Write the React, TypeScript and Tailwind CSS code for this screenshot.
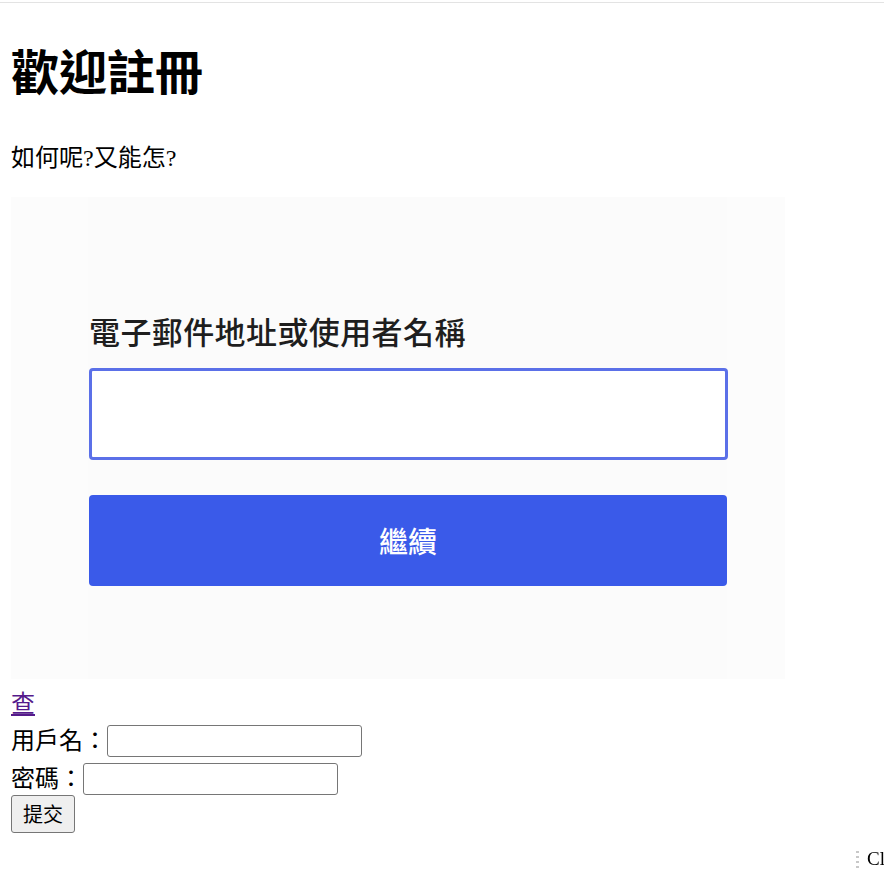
import React from "react";

export default function App() {
  return (
    <div className="relative min-h-[871px] bg-white text-black font-['Liberation_Serif','Noto_Sans_CJK_TC',serif]">
      <div className="h-[2px]" />
      <div className="h-px bg-[#e3e3e3]" />
      <div className="pl-[11px]">
        <h1 className="mt-[43px] h-[56px] text-[48px] leading-[56px] font-bold">歡迎註冊</h1>
        <p className="mt-[42px] h-[28px] text-[24px] leading-[28px]">如何呢?又能怎?</p>
        <div className="mt-[25px] flex h-[482px] w-[774px] bg-[#fcfcfc]">
          <div className="ml-[77px] flex w-[639px] flex-col bg-[#fbfbfb] pt-[112px] font-['Noto_Sans_CJK_TC',sans-serif]">
            <div className="ml-[1px] h-[44px] text-[31px] leading-[44px] font-medium text-[#1e1e1e] tracking-[0.4px]">
              電子郵件地址或使用者名稱
            </div>
            <div className="mt-[15px] ml-[1px] h-[92px] w-[639px] rounded-[4px] border-[3px] border-[#5b70e8] bg-white" />
            <div className="mt-[35px] ml-[1px] flex h-[91px] w-[638px] items-center justify-center rounded-[4px] bg-[#3a5ae9] text-[29px] font-medium text-white">
              繼續
            </div>
          </div>
        </div>
        <div className="flex h-[46px] items-center pt-[4px] text-[24px]">
          <a href="#" className="text-[#551a8b] underline">查</a>
        </div>
        <div className="flex h-[32px] items-center text-[24px]">
          <span>用戶名：</span>
          <div className="h-[32px] w-[255px] rounded-[3px] border border-[#767676] bg-white" />
        </div>
        <div className="mt-[6px] flex h-[32px] items-center text-[24px]">
          <span>密碼：</span>
          <div className="h-[32px] w-[255px] rounded-[3px] border border-[#767676] bg-white" />
        </div>
        <button className="flex h-[38px] w-[64px] items-center justify-center rounded-[3px] border border-[#767676] bg-[#efefef] text-[20px] font-['Noto_Sans_CJK_TC',sans-serif]">
          提交
        </button>
      </div>
      <div className="fixed left-[856px] top-[849px] flex items-center gap-[8px]">
        <div className="flex flex-col gap-[3px]">
          <div className="h-[2px] w-[3px] bg-[#c8c8c8]" />
          <div className="h-[2px] w-[3px] bg-[#c8c8c8]" />
          <div className="h-[2px] w-[3px] bg-[#c8c8c8]" />
          <div className="h-[2px] w-[3px] bg-[#c8c8c8]" />
        </div>
        <span className="text-[19px] leading-[20px] text-black whitespace-nowrap">Cl</span>
      </div>
    </div>
  );
}
